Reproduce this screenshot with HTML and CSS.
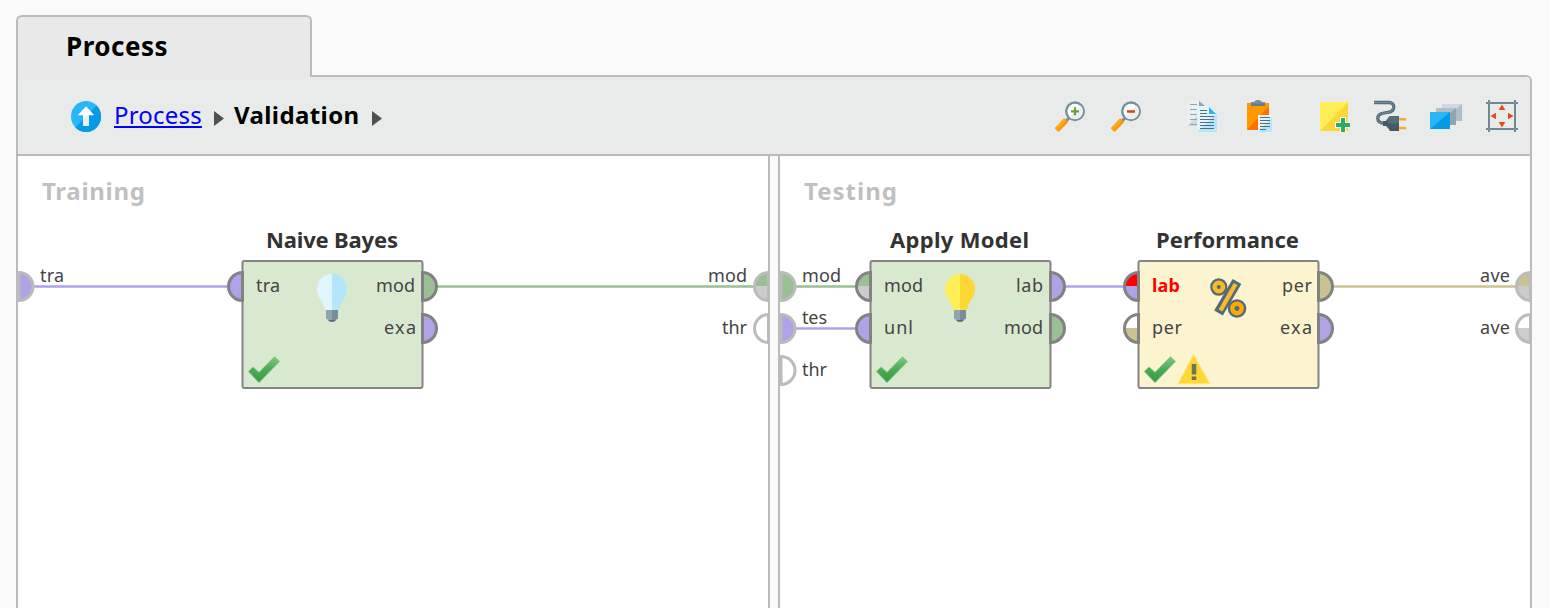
FILE: index.html
```html
<!DOCTYPE html>
<html lang="en">
<head>
<meta charset="utf-8">
<title>Process</title>
<link rel="stylesheet" href="styles.css">
</head>
<body>
<svg class="defs" width="0" height="0" aria-hidden="true">
  <defs>
    <linearGradient id="checkFill" x1="0" y1="0" x2="0" y2="1">
      <stop offset="0" stop-color="#7fca86"/><stop offset=".5" stop-color="#4bab54"/><stop offset="1" stop-color="#389a42"/>
    </linearGradient>
    <symbol id="bulb" viewBox="0 0 30 48" overflow="visible">
      <path class="bulb-l" d="M15 0A15 15 0 0 0 0 15C0 21 3 24.500 5 27.500C7 31 7 33.500 8.500 36H15Z"/>
      <path class="bulb-r" d="M15 0A15 15 0 0 1 30 15C30 21 27 24.500 25 27.500C23 31 23 33.500 21.500 36H15Z"/>
      <path fill="#90a4ae" d="M9 36H15V47H13L9 44.500Z"/>
      <path fill="#788f9b" d="M15 36H21V44.500L17 47H15Z"/>
      <path fill="#546e7a" d="M11 46H19Q18 48 15 48T11 46Z"/>
    </symbol>
    <symbol id="check" viewBox="0 0 32 27" overflow="visible">
      <path fill="url(#checkFill)" stroke="#8fcb92" stroke-width=".8" d="M.3 15.500L5 10.800L11 16.300L26.500 .5L31.700 5.500L11 26.700Z"/>
    </symbol>
    <symbol id="halfRight" overflow="visible"><path d="M.5 -14A14 14 0 0 1 .5 14Z"/></symbol>
    <symbol id="halfLeft" overflow="visible"><path d="M-.5 -14A14 14 0 0 0 -.5 14Z"/></symbol>
  </defs>
</svg>

<main class="window">
  <div class="tab">Process</div>
  <section class="panel">
    <header class="toolbar">
      <nav class="crumbs">
        <svg class="up" viewBox="0 0 30 31"><ellipse cx="15" cy="15.500" rx="15" ry="15.500" fill="#29b6f6"/><path fill="#039be5" d="M25.600 4.500A15 15.500 0 0 1 4.400 26.500Z"/><path fill="#fff" d="M15 5.300L23.300 14.300H18V25H12V14.300H6.700Z"/><path fill="#eceff1" d="M18 13V25H12V19Z"/></svg>
        <a class="crumb-link" href="#">Process</a>
        <svg class="caret" viewBox="0 0 10 15"><path fill="#505050" d="M0 0L10 7.500L0 15Z"/></svg>
        <span class="crumb-current">Validation</span>
        <svg class="caret" viewBox="0 0 10 15"><path fill="#505050" d="M0 0L10 7.500L0 15Z"/></svg>
      </nav>
      <div class="tools">
        <div class="group">
          <svg class="icon" viewBox="0 0 32 32"><path stroke="#78909c" stroke-width="3" d="M11 22L15 18"/><path fill="#ff9800" d="M10 18.200L14.200 22.300L4.500 32L.8 28.300Z"/><path fill="#ffa726" d="M10 18.200L12 20.200L2.500 30L.8 28.300Z"/><circle cx="21" cy="11.300" r="8.800" fill="#fff" stroke="#78909c" stroke-width="2.400"/><path fill="#eceff1" d="M26.700 5.600A8 8 0 0 1 15.300 17Z"/><path stroke="#689f38" stroke-width="2.200" d="M17 11.300H25M21 7.300V15.300"/></svg>
          <svg class="icon" viewBox="0 0 32 32"><path stroke="#78909c" stroke-width="3" d="M11 22L15 18"/><path fill="#ff9800" d="M10 18.200L14.200 22.300L4.500 32L.8 28.300Z"/><path fill="#ffa726" d="M10 18.200L12 20.200L2.500 30L.8 28.300Z"/><circle cx="21" cy="11.300" r="8.800" fill="#fff" stroke="#78909c" stroke-width="2.400"/><path fill="#eceff1" d="M26.700 5.600A8 8 0 0 1 15.300 17Z"/><path stroke="#d84315" stroke-width="2.600" d="M17 11.500H25"/></svg>
        </div>
        <div class="group">
          <svg class="icon" viewBox="0 0 32 32"><path fill="#eceff1" d="M1.300 0H13L19 6V26H1.300Z"/><path fill="#cfd8dc" d="M19 7V26H1.300Z"/><path fill="#90a4ae" d="M13 1L19 6H13Z"/><path stroke="#90a4ae" d="M4 4.500H11M4 9.500H11M4 14.500H11M4 19.500H11M4 24.500H11"/><path fill="#e1f5fe" d="M11 6H23L31 14V32H11Z"/><path fill="#b3e5fc" d="M31 13V32H11Z"/><path fill="#29b6f6" d="M23 7L30 14H23Z"/><path stroke="#546e7a" d="M14 10.500H21M14 13.500H21M14 16.500H28M14 19.500H28M14 22.500H28M14 25.500H28M14 28.500H28"/></svg>
          <svg class="icon" viewBox="0 0 32 32"><path fill="#ff9800" d="M5 3H27V30H5Z"/><path fill="#ff6f00" d="M27 6V30H5Z"/><path fill="#607d8b" d="M9 2H12Q16 -2 20 2H23V6H9Z"/><path fill="#78909c" d="M9 2H12Q16 -2 20 2H23V3.500H9Z"/><path fill="#e1f5fe" d="M16 15H30V32H16Z"/><path fill="#b3e5fc" d="M30 17V32H16Z"/><path stroke="#546e7a" d="M18 17.500H28M18 20.500H28M18 23.500H28M18 26.500H28M18 29.500H24"/></svg>
        </div>
        <div class="group">
          <svg class="icon" viewBox="0 0 32 32"><path fill="#ffee58" d="M2 2H30V31H2Z"/><path fill="#fdd835" d="M30 2V31H2Z"/><path stroke="#fff" stroke-width="6" d="M17 25H32M25 17V32"/><path stroke="#27ae60" stroke-width="4" d="M18 25H32M25 18V32"/></svg>
          <svg class="icon" viewBox="0 0 32 32" fill="none"><path stroke="#546e7a" stroke-width="3.300" d="M0 2.500H15C21.500 2.500 21.500 11.500 14 12.400C6 13.300 3.800 15 3.800 18.500C3.800 21.500 6 23.300 11 23.300"/><path stroke="#78909c" d="M0 2.500H15C21 2.500 21 11 14 12.400C6 13.300 3.800 15 3.800 18.500C3.800 21.500 6 23 10 23"/><path fill="#455a64" d="M9 21H12L14 18L16 16H25V31H16L14 28L12 26H9Z"/><path fill="#546e7a" d="M14 18L16 16H25V23.500H14Z"/><path stroke="#ffa726" stroke-width="2.400" d="M25 19.300H32M25 28H32"/></svg>
          <svg class="icon" viewBox="0 0 32 32"><path fill="#cfd8dc" d="M12 4H32V21H12Z"/><path fill="#b0bec5" d="M32 4V21H12Z"/><path fill="#b0bec5" d="M6 8H26V25H6Z"/><path fill="#90a4ae" d="M26 8V25H6Z"/><path fill="#29b6f6" d="M0 12H20V29H0Z"/><path fill="#039be5" d="M20 12V29H0Z"/></svg>
          <svg class="icon" viewBox="0 0 32 32"><path stroke="#607d8b" stroke-width="2" d="M3 0V32M29 0V32M0 3H32M0 29H32"/><path stroke="#90a4ae" stroke-width=".6" d="M3 0V32M29 0V32M0 3H32M0 29H32"/><path fill="#e64a19" d="M16 4.500L19.300 10H12.700ZM4.500 16L10 12.700V19.300ZM27.500 16L22 12.700V19.300ZM16 27.500L19.300 22H12.700Z"/></svg>
        </div>
      </div>
    </header>

    <div class="canvases">
      <svg class="canvas" viewBox="18 156 750 452">
        <text class="heading" x="42" y="200" textLength="103">Training</text>
        <path class="wire purple" d="M34 286.500H228"/>
        <path class="wire green" d="M437 286.500H754"/>
        <use class="port outer fill-purple" href="#halfRight" x="18.500" y="286.500"/>
        <text class="label" x="40" y="282" textLength="24">tra</text>
        <path fill="#98c092" d="M768 272.500V286H754Q755 274 768 272.500Z"/><path fill="#ccc" d="M754 286H768V301Q755 298 754 286Z"/>
        <use class="port outer" href="#halfLeft" x="769" y="286.500"/>
        <use class="port outer" href="#halfLeft" x="769" y="328.500"/>
        <text class="label" x="708" y="282" textLength="39">mod</text>
        <text class="label" x="722" y="334" textLength="25">thr</text>

        <text class="title" x="266" y="248" textLength="132">Naive Bayes</text>
        <rect class="node ok" x="242.500" y="261" width="180" height="127" rx="2"/>
        <use class="port fill-purple" href="#halfLeft" x="243" y="286.500"/>
        <use class="port fill-green" href="#halfRight" x="422" y="286.500"/>
        <use class="port fill-purple" href="#halfRight" x="422" y="328.500"/>
        <text class="label" x="256" y="292" textLength="24">tra</text>
        <text class="label" x="376" y="292" textLength="39">mod</text>
        <text class="label" x="384" y="334" textLength="32">exa</text>
        <use class="bulb-blue" href="#bulb" x="317" y="274" width="30" height="48"/>
        <use href="#check" x="248" y="356" width="32" height="27"/>
      </svg>
      <div class="divider"></div>
      <svg class="canvas" viewBox="780 156 750 452">
        <text class="heading" x="804" y="200" textLength="93">Testing</text>
        <path class="wire green" d="M796 286.500H856"/>
        <path class="wire purple" d="M796 328.500H856"/>
        <path class="wire purple" d="M1065 286.500H1124"/>
        <path class="wire tan" d="M1333 286.500H1516"/>
        <use class="port outer fill-green" href="#halfRight" x="780.500" y="286.500"/>
        <use class="port outer fill-purple" href="#halfRight" x="780.500" y="328.500"/>
        <use class="port outer" href="#halfRight" x="780.500" y="370.500"/>
        <text class="label" x="802" y="282" textLength="39">mod</text>
        <text class="label" x="802" y="324" textLength="25">tes</text>
        <text class="label" x="802" y="376" textLength="25">thr</text>

        <text class="title" x="890" y="248" textLength="139">Apply Model</text>
        <rect class="node ok" x="870.500" y="261" width="180" height="127" rx="2"/>
        <path fill="#98c092" d="M870.500 272.500V286H856.500A14 14 0 0 1 870.500 272.500Z"/><path fill="#ccc" d="M856.500 286H870.500V300.500A14 14 0 0 1 856.500 286Z"/>
        <use class="port" href="#halfLeft" x="871" y="286.500"/>
        <use class="port fill-purple" href="#halfLeft" x="871" y="328.500"/>
        <use class="port fill-purple" href="#halfRight" x="1050" y="286.500"/>
        <use class="port fill-green" href="#halfRight" x="1050" y="328.500"/>
        <text class="label" x="884" y="292" textLength="39">mod</text>
        <text class="label" x="884" y="334" textLength="29">unl</text>
        <text class="label" x="1016" y="292" textLength="27">lab</text>
        <text class="label" x="1004" y="334" textLength="39">mod</text>
        <use class="bulb-yellow" href="#bulb" x="945" y="274" width="30" height="48"/>
        <use href="#check" x="876" y="356" width="32" height="27"/>

        <text class="title" x="1156" y="248" textLength="143">Performance</text>
        <rect class="node warn" x="1138.500" y="261" width="180" height="127" rx="2"/>
        <path fill="#f00" d="M1138.500 272.500V286H1124.500A14 14 0 0 1 1138.500 272.500Z"/><path fill="#b1a2e8" d="M1124.500 286H1138.500V300.500A14 14 0 0 1 1124.500 286Z"/>
        <path fill="#fff" d="M1138.500 314.500V328H1124.500A14 14 0 0 1 1138.500 314.500Z"/><path fill="#cac291" d="M1124.500 328H1138.500V342.500A14 14 0 0 1 1124.500 328Z"/>
        <use class="port" href="#halfLeft" x="1139" y="286.500"/>
        <use class="port" href="#halfLeft" x="1139" y="328.500"/>
        <use class="port fill-tan" href="#halfRight" x="1318" y="286.500"/>
        <use class="port fill-purple" href="#halfRight" x="1318" y="328.500"/>
        <text class="label error" x="1152" y="292" textLength="28">lab</text>
        <text class="label" x="1152" y="334" textLength="30">per</text>
        <text class="label" x="1282" y="292" textLength="30">per</text>
        <text class="label" x="1280" y="334" textLength="32">exa</text>
        <g class="percent">
          <g class="percent-edge"><ellipse cx="1218.800" cy="287" rx="8.600" ry="8.700"/><path class="slash" d="M1237 281.500L1218.500 313"/><ellipse cx="1237" cy="308.500" rx="9.300" ry="9.200"/></g>
          <g class="percent-face"><ellipse cx="1218.800" cy="287" rx="4.200" ry="4.200"/><path d="M1235.600 284L1220.500 310.500"/><ellipse class="deep" cx="1237" cy="308.500" rx="4.700" ry="4.700"/></g>
        </g>
        <use href="#check" x="1144" y="356" width="32" height="27"/>
        <path fill="#fdd835" stroke="#fde475" stroke-width=".8" d="M1193.500 354.500L1209.700 383.500H1178.300Z"/>
        <path fill="#6f7455" d="M1191.700 364H1196.300V374.500H1191.700ZM1191.700 376.500H1196.300V380H1191.700Z"/>

        <path fill="#cac291" d="M1530 272.500V286H1516Q1517 274 1530 272.500Z"/><path fill="#ccc" d="M1516 286H1530V301Q1517 298 1516 286Z"/>
        <path fill="#ccc" d="M1516 328H1530V343Q1517 340 1516 328Z"/>
        <use class="port outer" href="#halfLeft" x="1531" y="286.500"/>
        <use class="port outer" href="#halfLeft" x="1531" y="328.500"/>
        <text class="label" x="1480" y="282" textLength="30">ave</text>
        <text class="label" x="1480" y="334" textLength="30">ave</text>
      </svg>
    </div>
  </section>
</main>
</body>
</html>
```

FILE: styles.css
```css
* { box-sizing: border-box; }
body {
  margin: 0;
  height: 608px;
  overflow: hidden;
  background: #fafafa;
  font-family: "Noto Sans", "Open Sans", sans-serif;
}
.defs { display: block; }
.window {
  display: flex;
  flex-direction: column;
  height: 608px;
  padding: 15px 18px 0 16px;
}
.tab {
  flex: none;
  width: 296px;
  height: 62px;
  margin-bottom: -2px;
  padding-left: 48px;
  border: 2px solid #bbb;
  border-bottom: 0;
  border-radius: 6px 6px 0 0;
  background: #e9e9e9;
  color: #000;
  font-size: 26px;
  font-weight: 700;
  letter-spacing: .5px;
  line-height: 58px;
  z-index: 1;
}
.panel {
  flex: 1;
  display: flex;
  flex-direction: column;
  border: 2px solid #bbb;
  border-bottom: 0;
  border-radius: 0 6px 0 0;
  overflow: hidden;
}
.toolbar {
  flex: none;
  display: flex;
  align-items: center;
  justify-content: space-between;
  height: 79px;
  padding: 1px 12px 0 53px;
  border-bottom: 2px solid #bbb;
  background: #e8ebea;
}
.crumbs { display: flex; align-items: center; font-size: 24px; line-height: 34px; }
.up { width: 30px; height: 31px; margin-right: 13px; }
.crumb-link {
  width: 88px;
  margin-top: -2px;
  color: #00f;
  letter-spacing: .2px;
  white-space: nowrap;
  text-decoration-thickness: 2px;
  text-underline-offset: 2px;
  text-decoration-skip-ink: none;
}
.caret { width: 10px; height: 15px; margin: 5px 10px 0 12px; }
.crumb-current {
  width: 126px;
  margin-top: -2px;
  color: #000;
  font-weight: 700;
  letter-spacing: .4px;
  white-space: nowrap;
}
.tools { display: flex; gap: 44px; }
.group { display: flex; gap: 24px; }
.icon { width: 32px; height: 32px; }
.canvases { flex: 1; display: flex; }
.canvas { flex: none; display: block; width: 750px; height: 452px; background: #fff; }
.divider {
  flex: none;
  width: 12px;
  border: solid #bbb;
  border-width: 0 2px;
  background: #fafafa;
}
.heading { fill: #c0c0c0; font-size: 24px; font-weight: 700; }
.title { fill: #333; font-size: 22px; font-weight: 700; }
.label { fill: #444; font-size: 18px; }
.error { fill: #f00; font-weight: 700; }
.wire { fill: none; stroke-width: 2.6; }
.purple { stroke: #b1a2e8; }
.green { stroke: #98c092; }
.tan { stroke: #cac291; }
.node { stroke: #848484; stroke-width: 2; }
.ok { fill: #d9e9cf; }
.warn { fill: #fcf3cf; }
.port { fill: none; stroke: #828282; stroke-width: 3; }
.outer { stroke: #bbb; }
.fill-purple { fill: #b1a2e8; }
.fill-green { fill: #98c092; }
.fill-tan { fill: #cac291; }
.bulb-l, .bulb-r { fill: var(--glass); }
.bulb-r { fill: var(--shade); }
.bulb-blue { --glass: #e1f5fe; --shade: #b3e5fc; }
.bulb-yellow { --glass: #ffee58; --shade: #fdd835; }
.percent-edge { fill: #506b78; stroke: none; }
.percent-edge .slash { stroke: #506b78; stroke-width: 10; }
.percent-face { fill: none; stroke: #fbb829; stroke-width: 4.4; }
.deep { stroke: #ffa800; }
```
